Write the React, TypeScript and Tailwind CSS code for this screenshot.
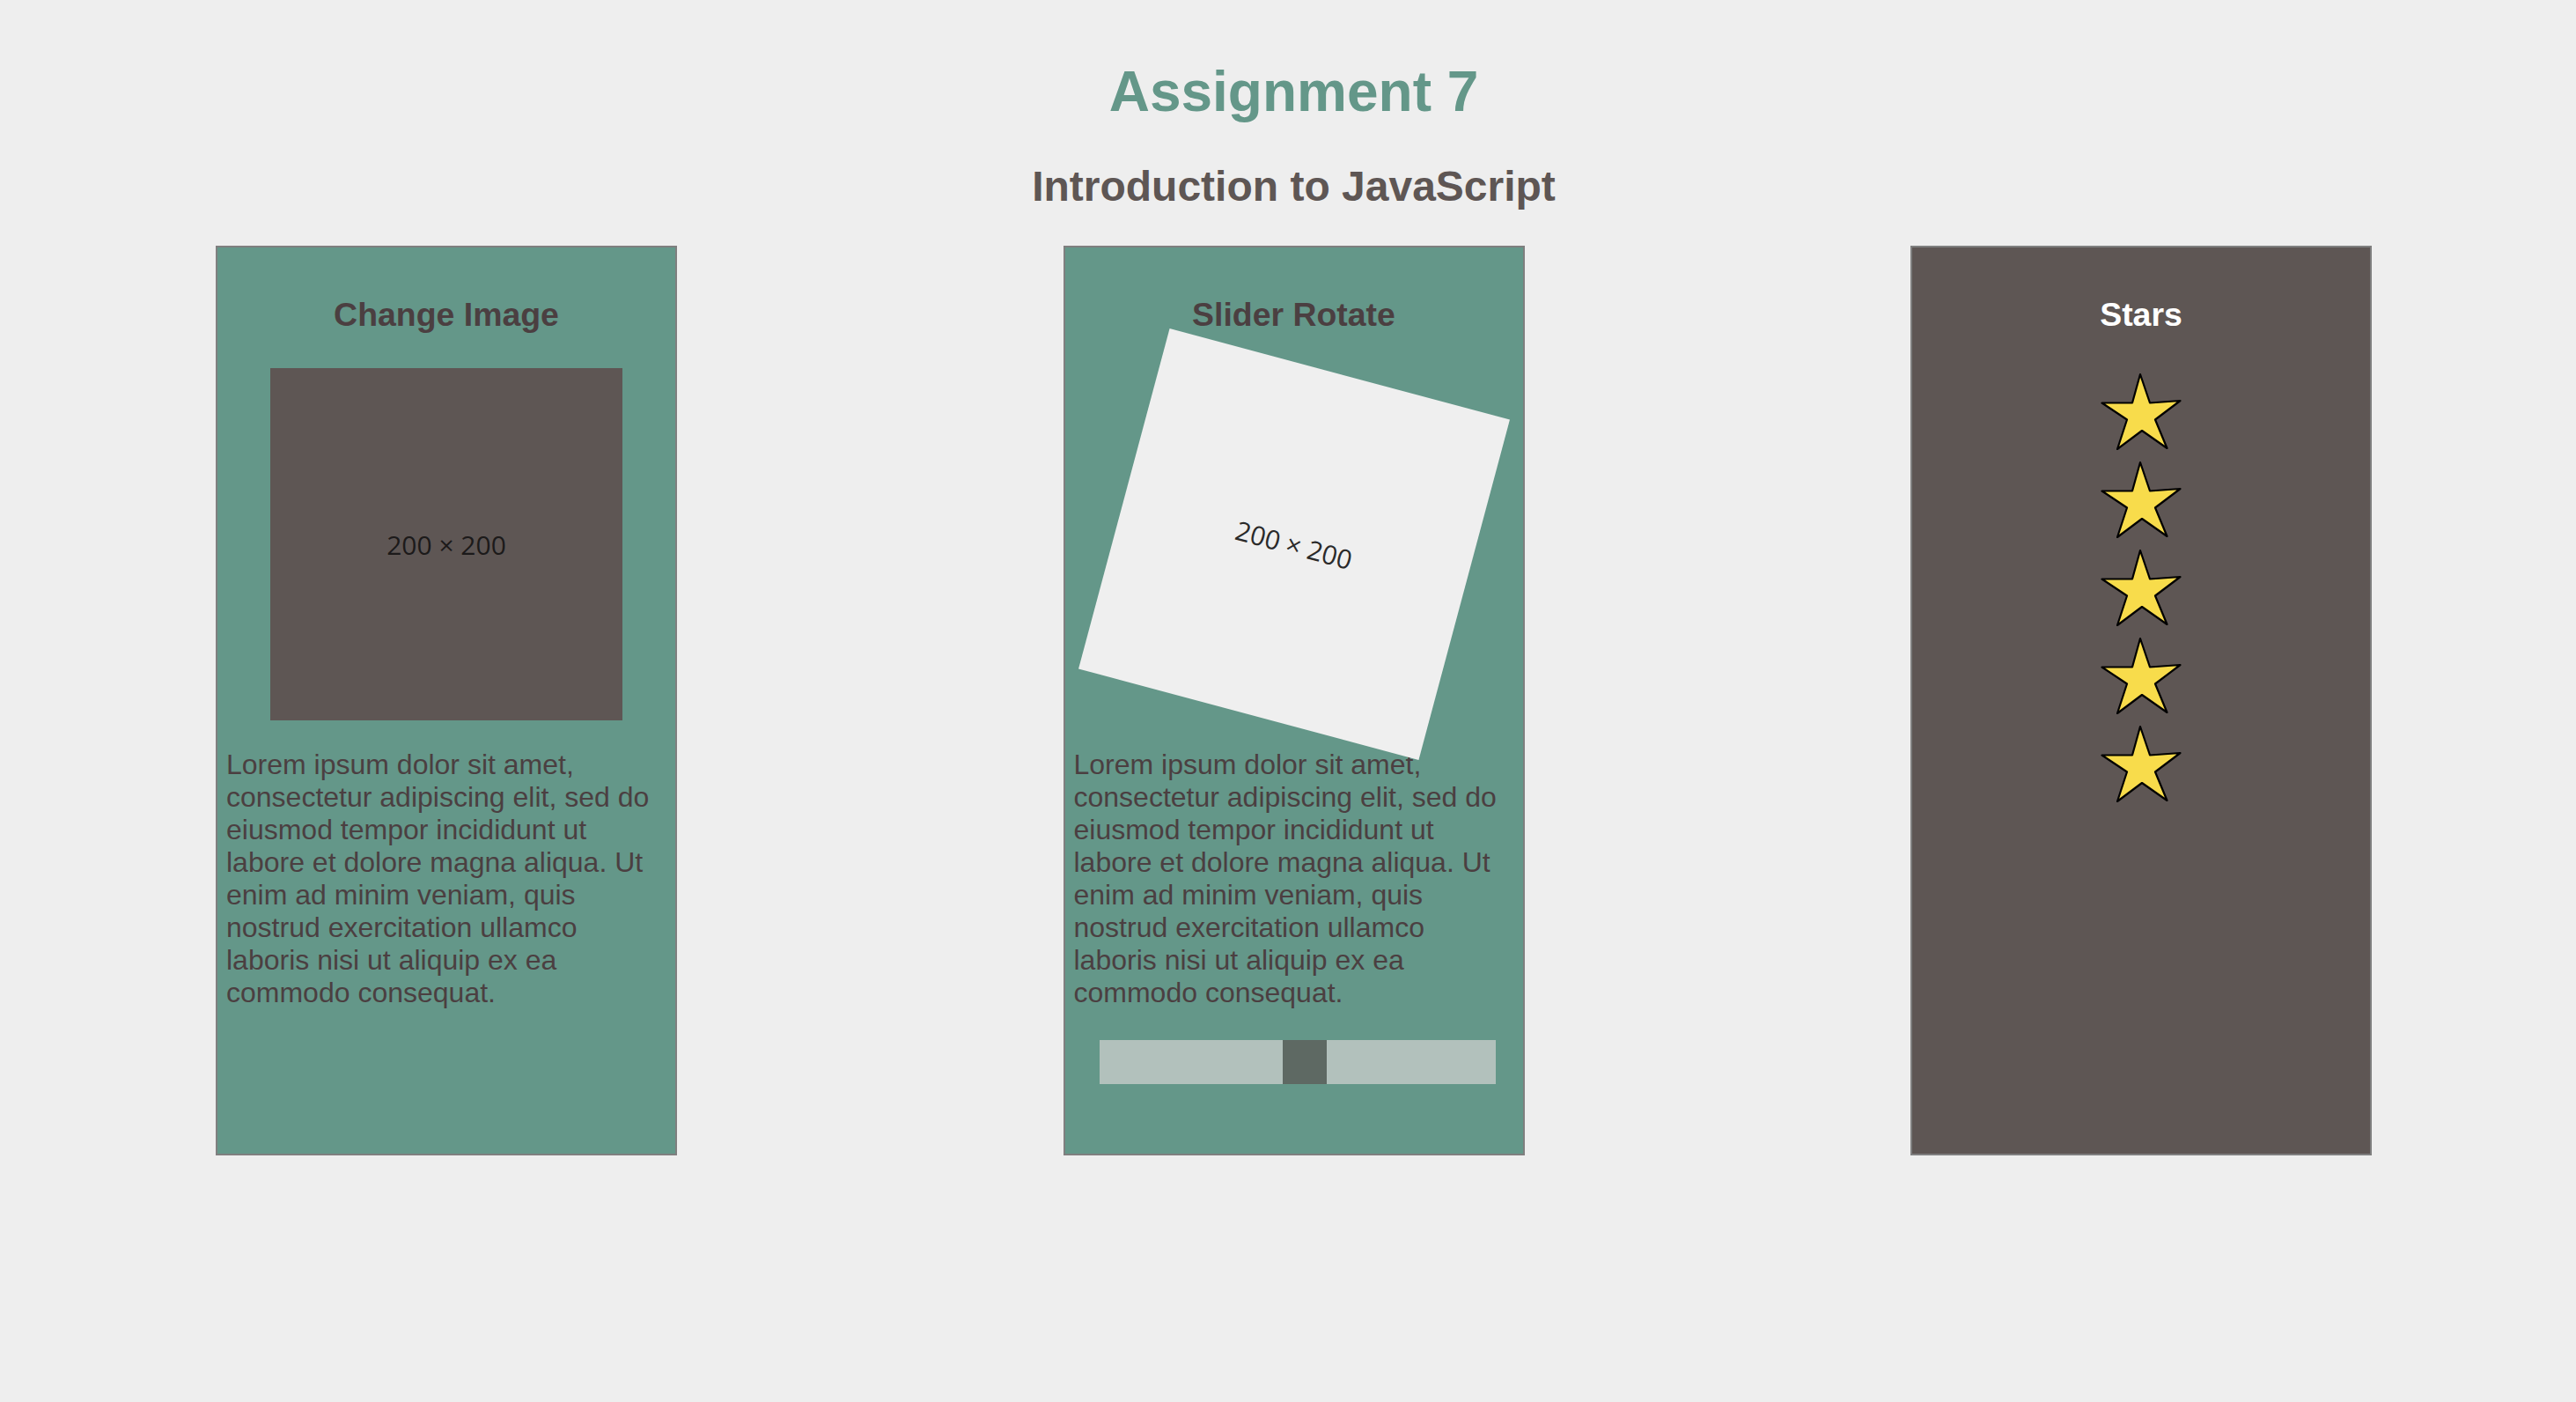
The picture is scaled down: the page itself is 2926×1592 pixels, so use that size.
const lorem =
    "Lorem ipsum dolor sit amet, consectetur adipiscing elit, sed do eiusmod tempor incididunt ut labore et dolore magna aliqua. Ut enim ad minim veniam, quis nostrud exercitation ullamco laboris nisi ut aliquip ex ea commodo consequat."

const Star = () => (
    <svg className="w-[92px] h-[88px] mt-[12px] first:mt-0" viewBox="0 0 92 88">
        <polygon
            points="45,2 56,34.5 90.5,32 62,53.5 75.5,86 47,66 19,87 30,53.5 1.5,34.5 36,34.5"
            fill="#f8dc4b"
            stroke="#000"
            strokeWidth="2.2"
            strokeLinejoin="round"
        />
    </svg>
)

const Placeholder = ({ className }: { className: string }) => (
    <div
        className={`w-[400px] h-[400px] flex items-center justify-center shrink-0 font-['Open_Sans',sans-serif] text-[30px] ${className}`}
    >
        200 × 200
    </div>
)

const Card = ({ children, className }: { children: React.ReactNode, className: string }) => (
    <div className={`w-[524px] h-[1033px] border-2 border-[#7f7f7f] flex flex-col items-center pt-[55px] ${className}`}>
        {children}
    </div>
)

const App = () => {
    return (
        <div className="min-h-screen bg-[#eeeeee] pl-[13px] pt-[67px] leading-[normal] font-['Liberation_Sans',Arial,sans-serif]">
            <h1 className="text-[64px] font-bold text-center text-[#649789] mb-[43px]">Assignment 7</h1>
            <h2 className="text-[48px] font-bold text-center text-[#5e5654] mb-[40px]">Introduction to JavaScript</h2>

            <div className="flex justify-between px-[232px]">
                <Card className="bg-[#649789]">
                    <h3 className="text-[37.44px] font-bold text-[#4b3f41]">Change Image</h3>
                    <Placeholder className="mt-[39px] bg-[#5e5654] text-[#1c1a1a]" />
                    <p className="mt-[32px] w-full px-[10px] text-[32px] text-[#4b3f41]">{lorem}</p>
                </Card>

                <Card className="bg-[#649789]">
                    <h3 className="text-[37.44px] font-bold text-[#4b3f41]">Slider Rotate</h3>
                    <Placeholder className="mt-[39px] bg-[#efefef] text-[#2a2a2a] rotate-[15deg]" />
                    <p className="mt-[32px] w-full px-[10px] text-[32px] text-[#4b3f41]">{lorem}</p>
                    <div className="self-start ml-[39px] mt-[35px] w-[450px] h-[50px] bg-[#b2c1bc] flex">
                        <div className="w-[208px]" />
                        <div className="w-[50px] h-full bg-[#5e6963]" />
                    </div>
                </Card>

                <Card className="bg-[#5e5654]">
                    <h3 className="text-[37.44px] font-bold text-white">Stars</h3>
                    <div className="mt-[44px] flex flex-col items-center">
                        <Star />
                        <Star />
                        <Star />
                        <Star />
                        <Star />
                    </div>
                </Card>
            </div>
        </div>
    )
}

export default App
